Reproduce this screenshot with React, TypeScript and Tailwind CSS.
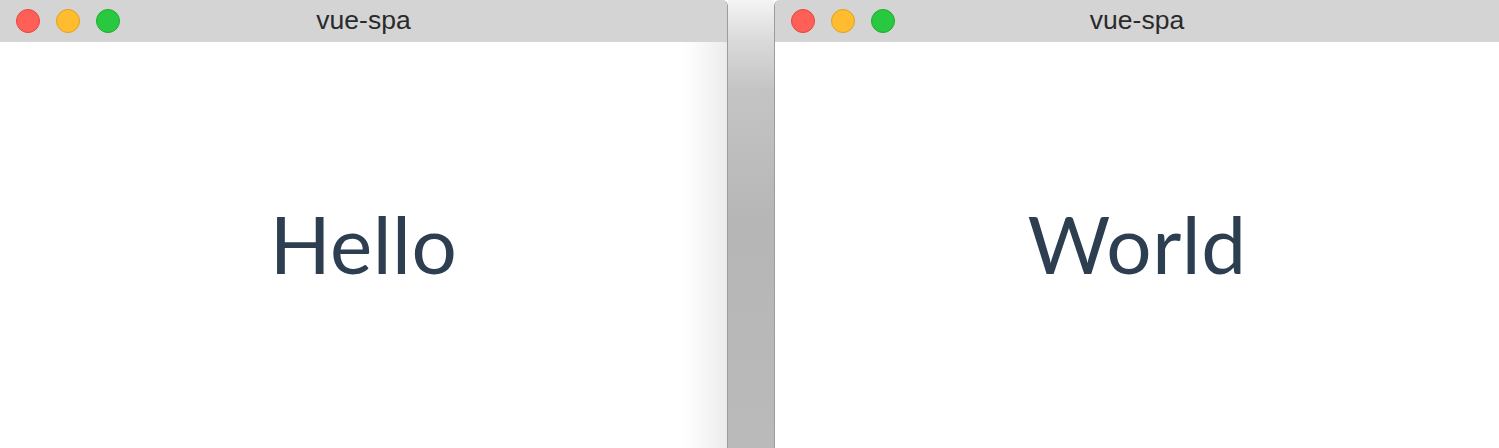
import React from 'react';

function TrafficLights() {
  return (
    <div className="flex items-center gap-4 pl-4">
      <span className="block w-6 h-6 rounded-full bg-[#fe5f57] border border-[#e2463f]" />
      <span className="block w-6 h-6 rounded-full bg-[#febc2e] border border-[#dfa123]" />
      <span className="block w-6 h-6 rounded-full bg-[#28c840] border border-[#1dad2b]" />
    </div>
  );
}

interface WindowProps {
  word: string;
  side: 'left' | 'right';
}

function AppWindow({ word, side }: WindowProps) {
  const isLeft = side === 'left';
  return (
    <div
      className={
        isLeft
          ? 'flex flex-col w-[728px] h-full border-r border-[#9c9c9c] rounded-tr-[6px] overflow-hidden'
          : 'flex flex-col flex-1 h-full border-l border-[#9c9c9c] rounded-tl-[6px] overflow-hidden'
      }
    >
      {/* title bar */}
      <div className="relative flex items-center h-[42px] shrink-0 bg-[#d4d4d4]">
        <TrafficLights />
        <div className="absolute inset-0 flex items-center justify-center pointer-events-none">
          <span className="font-['Liberation_Sans',Arial,sans-serif] text-[26.5px] leading-none text-[#2a2a2a] pb-[1px]">
            vue-spa
          </span>
        </div>
      </div>
      {/* content */}
      <div
        className={
          isLeft
            ? 'flex-1 flex items-center justify-center bg-linear-to-r from-white from-[94%] to-[#ececec]'
            : 'flex-1 flex items-center justify-center bg-white'
        }
      >
        <h1 className="font-['Lato',sans-serif] font-normal text-[80px] leading-none text-[#2c3e50] tracking-[0.5px] pb-[5px]">
          {word}
        </h1>
      </div>
    </div>
  );
}

export default function App() {
  return (
    <div className="flex w-[1499px] h-[448px] bg-white overflow-hidden">
      <AppWindow word="Hello" side="left" />
      <div className="w-[46px] h-full shrink-0 bg-[linear-gradient(to_bottom,#f4f4f4_0px,#dadada_40px,#c4c4c4_90px,#b6b6b6_220px,#bababa_448px)]" />
      <AppWindow word="World" side="right" />
    </div>
  );
}
